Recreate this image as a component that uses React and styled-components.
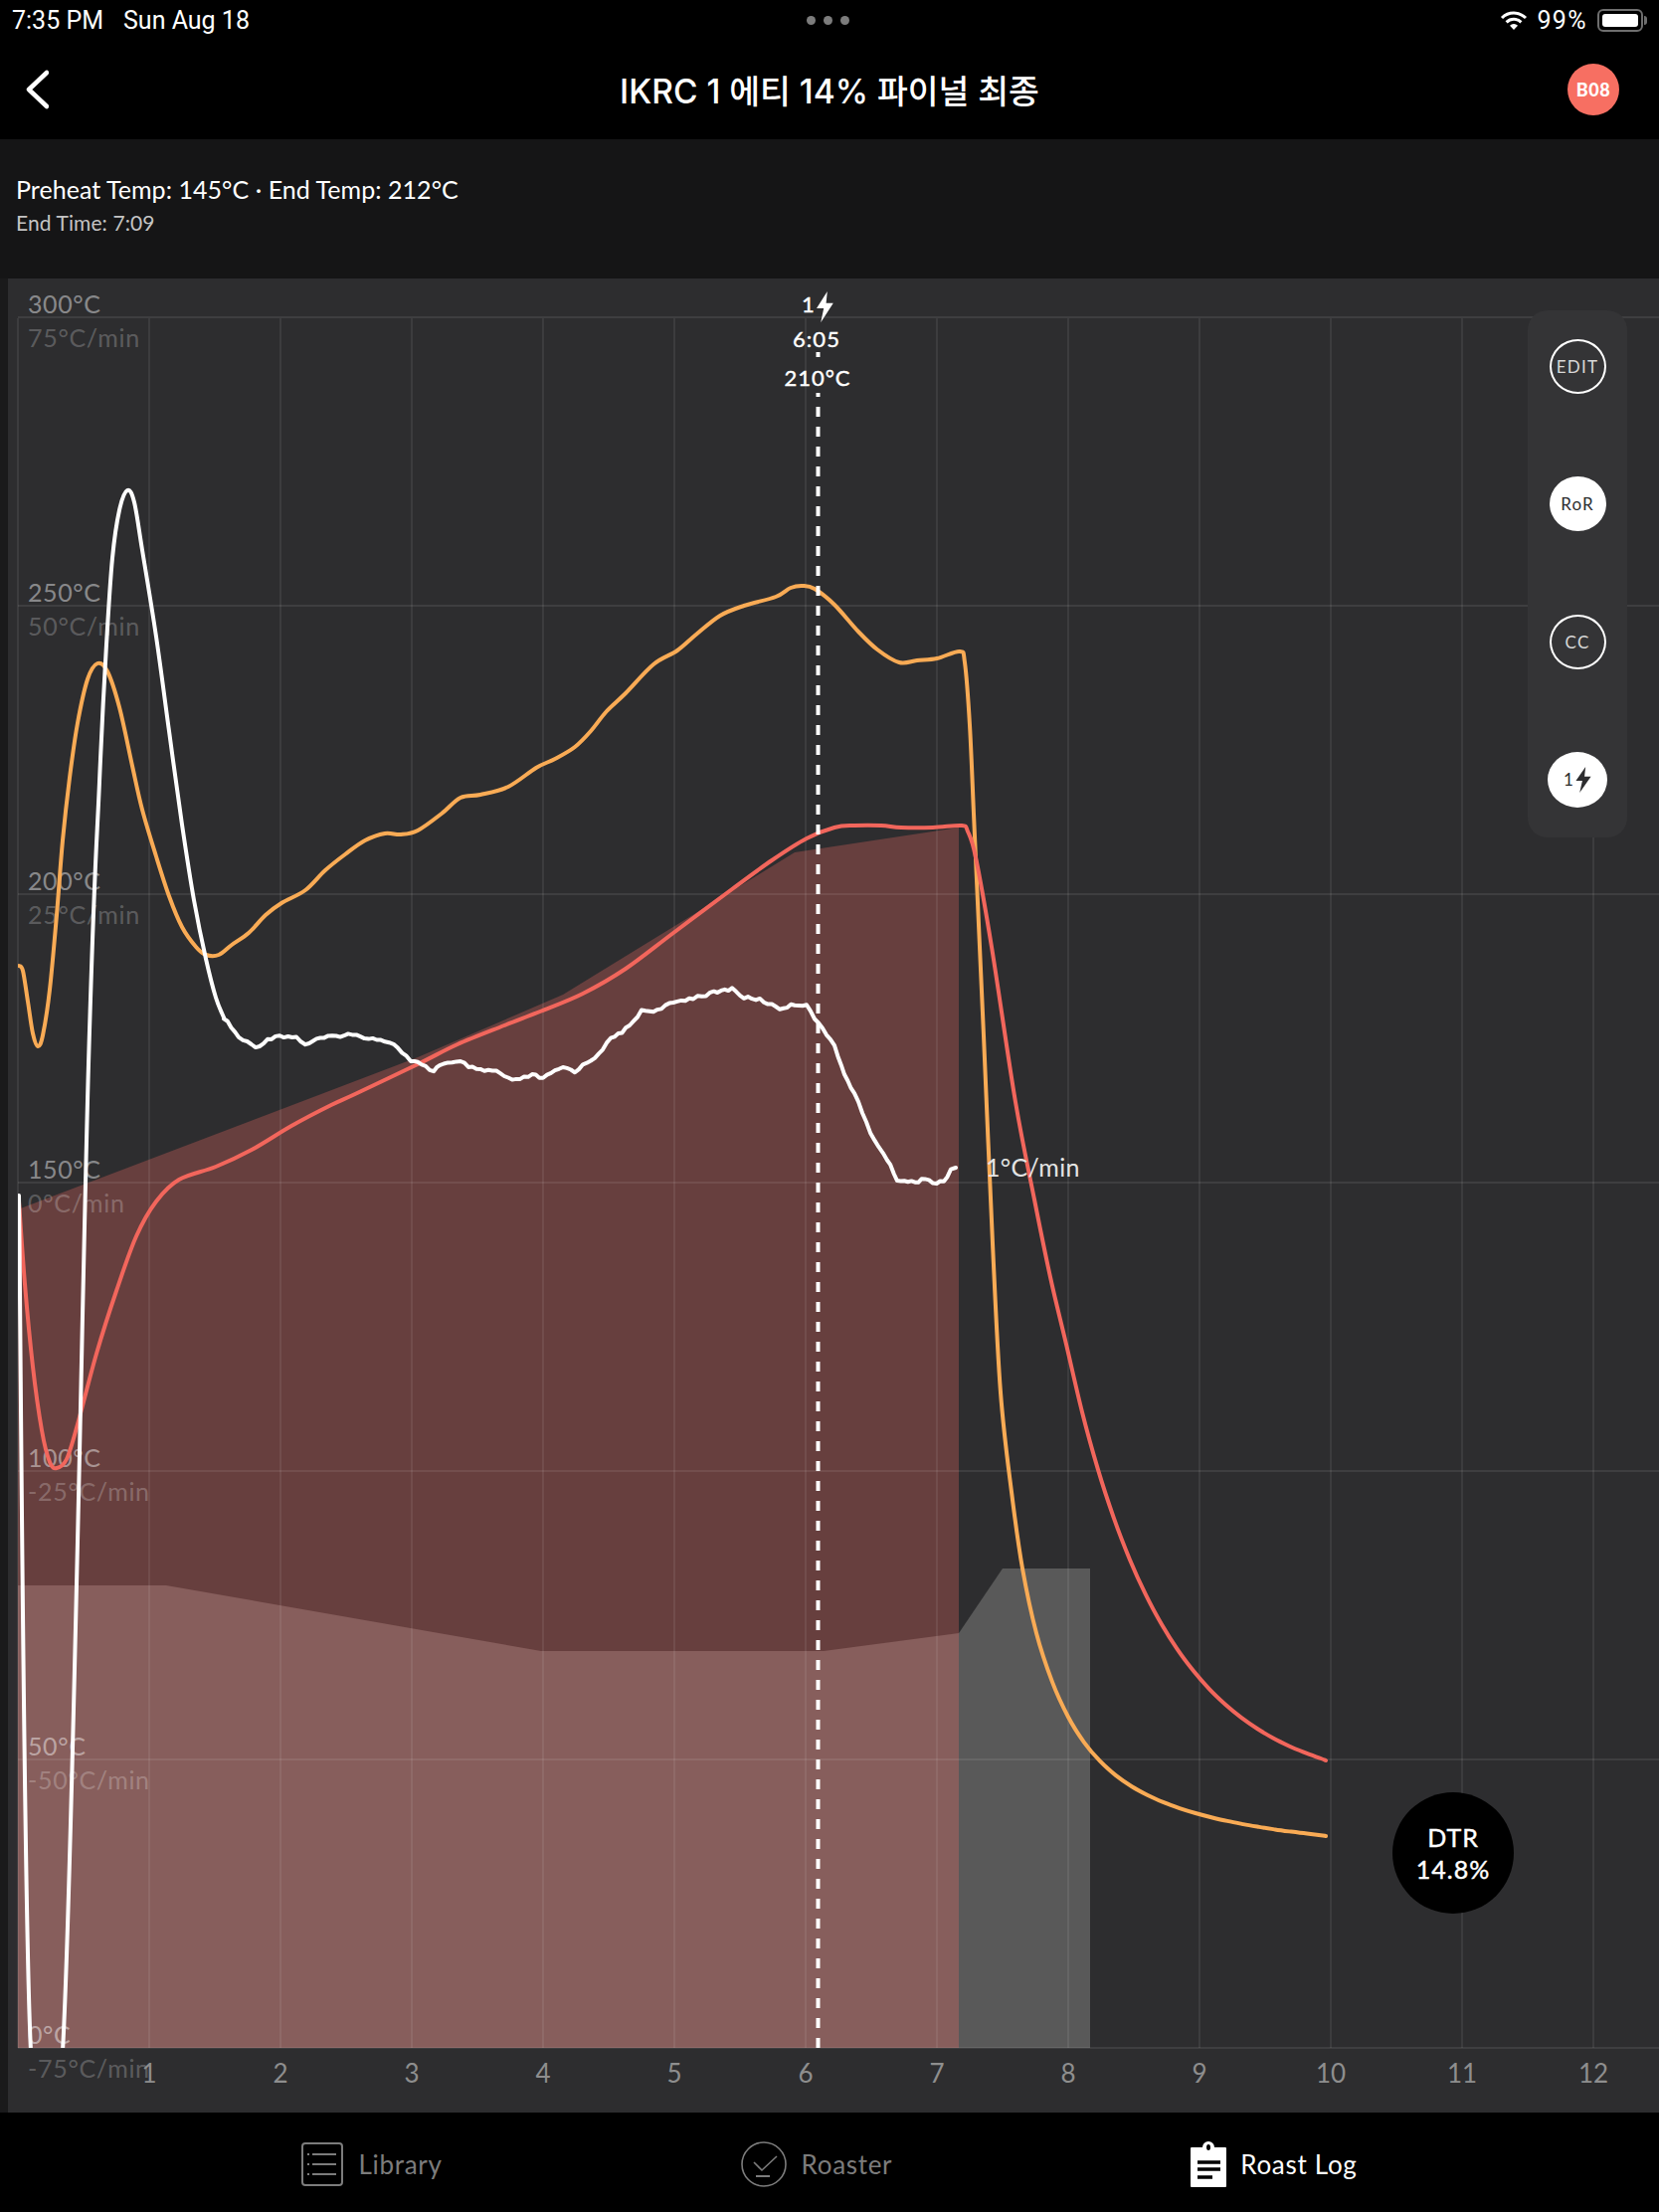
import React from "react";
import styled, { createGlobalStyle } from "styled-components";

const GlobalStyle = createGlobalStyle`
  html, body {
    margin: 0;
    padding: 0;
    background: #000;
  }
  * {
    box-sizing: border-box;
  }
`;

// cooling tails are plain decays, sampled so the smoothing stays clean
const sample = (from, to, fn) => {
  const out = [];
  for (let x = from; x <= to; x += 16) out.push([x, Math.round(fn(x) * 10) / 10]);
  return out;
};

const orangeTail = (x) =>
  1862 - 120 * Math.exp(-(x - 1042) / 40) - 100 * Math.exp(-(x - 1042) / 160);
const redTail = (x) => 1800 - 300 * Math.exp(-(x - 1111) / 97);

// all curve points are in page pixels, the chart svg viewBox starts at the panel corner
const ORANGE = [
  [19, 971], [23, 976], [28, 1007], [33, 1039], [38, 1052], [43, 1041], [50, 995], [57, 920],
  [63, 845], [70, 782], [78, 727], [88, 683], [98, 667], [108, 675], [120, 711], [133, 770],
  [143, 814], [157, 861], [170, 901], [183, 932], [197, 952], [207, 960], [220, 960], [233, 950],
  [250, 938], [267, 920], [283, 908], [307, 895], [327, 875], [347, 859], [367, 845], [387, 838],
  [403, 839], [420, 835], [444, 818], [463, 802], [483, 799], [511, 791], [539, 772], [558, 763],
  [578, 751], [594, 735], [610, 715], [629, 697], [657, 668], [681, 654], [701, 637], [724, 619],
  [748, 609], [780, 600], [795, 591], [807, 589], [819, 592], [839, 608], [863, 635], [882, 653],
  [904, 666], [922, 664], [942, 662], [965, 655], [970, 666], [975, 729], [979, 818], [983, 907],
  [989, 1041], [998, 1250], [1006, 1400], [1017, 1500], [1028, 1577],
  ...sample(1042, 1333, orangeTail),
  [1333, 1846],
];

const RED = [
  [19, 1208], [25, 1291], [33, 1374], [42, 1438], [50, 1470], [57, 1476], [67, 1467], [78, 1432],
  [97, 1361], [117, 1298], [137, 1243], [157, 1208], [180, 1186], [217, 1173], [253, 1156],
  [293, 1132], [333, 1111], [357, 1100], [420, 1070], [460, 1050], [507, 1031], [543, 1017],
  [586, 999], [629, 974], [677, 938], [736, 894], [776, 865], [811, 843], [839, 832], [859, 830],
  [886, 830], [906, 832], [938, 832], [967, 830], [973, 836], [981, 862], [997, 952], [1021, 1108],
  [1040, 1206], [1056, 1284],
  ...sample(1072, 1333, redTail),
  [1333, 1770],
];

const WHITE_RISE = [
  [19, 1202], [31, 2062], [63, 2062], [89, 1070], [100, 786], [107, 648], [113, 561], [120, 513],
  [128, 493], [135, 505], [143, 553], [157, 640], [170, 735], [183, 829], [195, 905], [207, 964],
  [217, 1003], [225, 1023],
];

const WHITE_NOISY = [
  [225, 1023], [240, 1043], [257, 1053], [277, 1041], [298, 1043], [307, 1050], [322, 1044],
  [350, 1040], [387, 1046], [400, 1053], [413, 1067], [420, 1069], [436, 1077], [442, 1070],
  [463, 1068], [479, 1076], [499, 1077], [515, 1087], [535, 1081], [546, 1084], [566, 1073],
  [578, 1077], [598, 1063], [614, 1045], [633, 1032], [645, 1016], [661, 1016], [677, 1008],
  [697, 1003], [714, 999], [736, 994], [748, 1003], [764, 1005], [784, 1014], [799, 1010],
  [811, 1010], [823, 1030], [839, 1050], [849, 1081], [859, 1099], [875, 1139], [892, 1166],
  [902, 1186], [920, 1189], [930, 1184], [938, 1189], [949, 1189], [956, 1175], [961, 1174],
];

const DARK_AREA = "18,1216 420,1063 566,1000 799,857 964,832 964,2059 18,2059";
const LIGHT_AREA = "18,1594 167,1594 544,1660 828,1660 964,1642 964,2059 18,2059";
const GRAY_AREA = "964,1642 1008,1577 1096,1577 1096,2059 964,2059";

const gridX = (t) => 18 + 132 * t;
const gridY = (temp) => 2059 - 5.8 * temp;

const TICKS = [1, 2, 3, 4, 5, 6, 7, 8, 9, 10, 11, 12];
const SCALE = [
  { temp: 300, rate: 75 },
  { temp: 250, rate: 50 },
  { temp: 200, rate: 25 },
  { temp: 150, rate: 0 },
  { temp: 100, rate: -25 },
  { temp: 50, rate: -50 },
  { temp: 0, rate: -75 },
];

// catmull-rom through the points
const smoothPath = (pts) => {
  let d = `M${pts[0][0]} ${pts[0][1]}`;
  for (let i = 0; i < pts.length - 1; i++) {
    const p0 = pts[i - 1] || pts[i];
    const p1 = pts[i];
    const p2 = pts[i + 1];
    const p3 = pts[i + 2] || p2;
    const c1x = p1[0] + (p2[0] - p0[0]) / 6;
    const c1y = p1[1] + (p2[1] - p0[1]) / 6;
    const c2x = p2[0] - (p3[0] - p1[0]) / 6;
    const c2y = p2[1] - (p3[1] - p1[1]) / 6;
    d += ` C${c1x.toFixed(1)} ${c1y.toFixed(1)} ${c2x.toFixed(1)} ${c2y.toFixed(1)} ${p2[0]} ${p2[1]}`;
  }
  return d;
};

// the sensor line wobbles, add a small repeatable jitter
const noisyPath = (pts) => {
  let d = "";
  let n = 0;
  for (let i = 0; i < pts.length - 1; i++) {
    const [x1, y1] = pts[i];
    const [x2, y2] = pts[i + 1];
    const steps = Math.max(1, Math.round((x2 - x1) / 4));
    for (let s = 0; s < steps; s++) {
      const k = s / steps;
      const hash = Math.sin(++n * 12.9898) * 43758.5453;
      const jitter = (hash - Math.floor(hash) - 0.5) * 3;
      d += `${d ? " L" : "M"}${(x1 + (x2 - x1) * k).toFixed(1)} ${(y1 + (y2 - y1) * k + jitter).toFixed(1)}`;
    }
  }
  const last = pts[pts.length - 1];
  return `${d} L${last[0]} ${last[1]}`;
};

const BOLT = "M9 0 L0 13 H6 L3.5 24 L14 9 H8 Z";

const Page = styled.div`
  width: 1668px;
  height: 2224px;
  display: flex;
  flex-direction: column;
  background: #000;
  font-family: "Lato", "Noto Sans CJK KR", sans-serif;
  color: #fff;
  overflow: hidden;
`;

const StatusBar = styled.div`
  height: 40px;
  flex: none;
  display: grid;
  grid-template-columns: 1fr auto 1fr;
  align-items: center;
  padding: 0 16px 0 12px;
  font-family: "Roboto", sans-serif;
  font-size: 25px;
`;

const StatusLeft = styled.div`
  display: flex;
  gap: 20px;
`;

const Dots = styled.div`
  display: flex;
  gap: 8px;
`;

const Dot = styled.span`
  width: 9px;
  height: 9px;
  border-radius: 50%;
  background: #7c7c7c;
`;

const StatusRight = styled.div`
  display: flex;
  align-items: center;
  justify-content: flex-end;
  gap: 9px;
`;

const Percent = styled.span`
  letter-spacing: 1.4px;
  margin-right: 1px;
`;

const Battery = styled.div`
  width: 46px;
  height: 23px;
  padding: 3px;
  border: 2px solid #6e6e6e;
  border-radius: 6px;
  position: relative;
  &::before {
    content: "";
    display: block;
    height: 100%;
    border-radius: 3px;
    background: #fff;
  }
  &::after {
    content: "";
    position: absolute;
    right: -6px;
    top: 5px;
    width: 3px;
    height: 9px;
    border-radius: 0 3px 3px 0;
    background: #6e6e6e;
  }
`;

const NavBar = styled.div`
  height: 100px;
  flex: none;
  display: flex;
  align-items: center;
  justify-content: space-between;
`;

const NavSide = styled.div`
  width: 200px;
  display: flex;
  justify-content: ${(p) => (p.$right ? "flex-end" : "flex-start")};
  padding: ${(p) => (p.$right ? "0 40px 0 0" : "0 0 0 25px")};
`;

const Title = styled.h1`
  margin: 0 0 2px;
  font-family: "Inter", "Noto Sans CJK KR", sans-serif;
  font-size: 33.5px;
  font-weight: 500;
  text-align: center;
`;

const Badge = styled.div`
  width: 52px;
  height: 52px;
  border-radius: 50%;
  background: #f76f62;
  display: flex;
  align-items: center;
  justify-content: center;
  font-size: 18px;
  letter-spacing: 0.5px;
  font-weight: 900;
`;

const Info = styled.div`
  height: 140px;
  flex: none;
  padding: 35px 16px 0;
  background: #151516;
`;

const InfoMain = styled.div`
  font-size: 25px;
  line-height: 30px;
  letter-spacing: 0.05px;
`;

const InfoSub = styled.div`
  margin-top: 7px;
  font-size: 21px;
  line-height: 24px;
  letter-spacing: 0.1px;
  color: #c4c4c4;
`;

const ChartWrap = styled.div`
  flex: 1;
  min-height: 0;
  padding-left: 8px;
  background: #1a1a1b;
`;

const ChartPanel = styled.div`
  position: relative;
  width: 1660px;
  height: 100%;
  background: #2d2d2f;
`;

const ChartSvg = styled.svg`
  display: block;
  font-family: "Lato", sans-serif;
`;

const TempLabel = styled.text`
  font-size: 25px;
  letter-spacing: 0.6px;
  fill: rgba(255, 255, 255, 0.45);
`;

const RateLabel = styled.text`
  font-size: 25px;
  letter-spacing: 0.7px;
  fill: rgba(255, 255, 255, 0.24);
`;

const TickLabel = styled.text`
  font-size: 26px;
  fill: #8e8e8e;
  text-anchor: middle;
`;

const MarkLabel = styled.text`
  font-size: 22px;
  fill: #fff;
  stroke: #fff;
  stroke-width: 0.4;
  text-anchor: middle;
  letter-spacing: 1px;
`;

const RorLabel = styled.text`
  font-size: 25px;
  letter-spacing: 0.3px;
  fill: #e4e4e4;
`;

const Curve = styled.path`
  fill: none;
  stroke: ${(p) => p.$color};
  stroke-width: 4;
  stroke-linejoin: round;
  stroke-linecap: round;
`;

const ButtonRail = styled.div`
  position: absolute;
  left: 1528px;
  top: 32px;
  width: 100px;
  height: 530px;
  padding: 29px 0 30px;
  border-radius: 20px;
  background: #343436;
  display: flex;
  flex-direction: column;
  align-items: center;
  justify-content: space-between;
`;

const RailButton = styled.div`
  width: ${(p) => (p.$wide ? "60px" : "57px")};
  height: ${(p) => (p.$wide ? "56px" : "55px")};
  border-radius: 50%;
  display: flex;
  align-items: center;
  justify-content: center;
  gap: 1px;
  font-size: 17px;
  letter-spacing: 1.2px;
  border: 2px solid #fff;
  background: ${(p) => (p.$filled ? "#fff" : "transparent")};
  color: ${(p) => (p.$filled ? "#2d2d2f" : "#d8d8d8")};
`;

const DtrBadge = styled.div`
  position: absolute;
  left: 1392px;
  top: 1522px;
  width: 122px;
  height: 122px;
  border-radius: 50%;
  background: #000;
  display: flex;
  flex-direction: column;
  align-items: center;
  justify-content: center;
  font-size: 25px;
  line-height: 32px;
  letter-spacing: 1px;
  -webkit-text-stroke: 0.4px #fff;
`;

const TabBar = styled.div`
  height: 100px;
  flex: none;
  padding-top: 3px;
  display: flex;
  align-items: center;
  justify-content: center;
  gap: 300px;
`;

const Tab = styled.div`
  display: flex;
  align-items: center;
  gap: ${(p) => (p.$active ? "14px" : "15px")};
  font-size: 26px;
  letter-spacing: 0.7px;
  color: ${(p) => (p.$active ? "#fff" : "#7c7c7c")};
`;

const WifiIcon = () => (
  <svg width="28" height="20" viewBox="0 0 28 20" fill="none">
    <path d="M2 8 A17 17 0 0 1 26 8" stroke="#fff" strokeWidth="3" />
    <path d="M6.6 12.4 A10.5 10.5 0 0 1 21.4 12.4" stroke="#fff" strokeWidth="3" />
    <path d="M14 20 L10 15.8 A5.6 5.6 0 0 1 18 15.8 Z" fill="#fff" />
  </svg>
);

const LibraryIcon = () => (
  <svg width="42" height="44" viewBox="0 0 42 44" fill="none" stroke="#7c7c7c" strokeWidth="2">
    <rect x="1" y="1" width="40" height="42" rx="3" />
    <path d="M11 12 H35 M11 22 H35 M11 32 H35" />
    <path d="M6 12 H8 M6 22 H8 M6 32 H8" />
  </svg>
);

const RoasterIcon = () => (
  <svg width="46" height="46" viewBox="0 0 46 46" fill="none" stroke="#7c7c7c" strokeWidth="1.6">
    <circle cx="23" cy="23" r="22" />
    <path d="M13 21 L21 29 L36 15" />
    <path d="M15 35 H29" strokeWidth="2" />
  </svg>
);

const RoastLogIcon = () => (
  <svg width="36" height="46" viewBox="0 0 36 46">
    <path d="M1 6 H12 A6 6 0 0 1 24 6 H35 A1 1 0 0 1 36 7 V45 A1 1 0 0 1 35 46 H1 A1 1 0 0 1 0 45 V7 A1 1 0 0 1 1 6 Z" fill="#fff" />
    <ellipse cx="18" cy="6" rx="2" ry="3" fill="#000" />
    <path d="M7 21 H30 M7 28 H30 M7 36 H22" stroke="#000" strokeWidth="3.5" />
  </svg>
);

const BackIcon = () => (
  <svg width="24" height="40" viewBox="0 0 24 40" fill="none">
    <path d="M22 3 L4 20 L22 37" stroke="#fff" strokeWidth="4.5" strokeLinecap="round" strokeLinejoin="round" />
  </svg>
);

const Chart = () => (
  <ChartSvg width="1660" height="1844" viewBox="8 280 1660 1844">
    <defs>
      <clipPath id="plot">
        <rect x="18" y="320" width="1650" height="1739" />
      </clipPath>
    </defs>

    <polygon points={DARK_AREA} fill="#673f3e" />
    <polygon points={LIGHT_AREA} fill="#875e5c" />
    <polygon points={GRAY_AREA} fill="#595959" />

    {[0, ...TICKS].map((t) => (
      <line key={t} x1={gridX(t)} x2={gridX(t)} y1="320" y2="2059" stroke="rgba(255,255,255,0.1)" strokeWidth="1.5" />
    ))}
    {SCALE.map((s) => (
      <line key={s.temp} x1="18" x2="1668" y1={gridY(s.temp)} y2={gridY(s.temp)} stroke="rgba(255,255,255,0.11)" strokeWidth="1.5" />
    ))}

    {SCALE.map((s) => (
      <React.Fragment key={s.temp}>
        <TempLabel x="28" y={gridY(s.temp) - 4}>{s.temp}°C</TempLabel>
        <RateLabel x="28" y={gridY(s.temp) + 30}>{s.rate}°C/min</RateLabel>
      </React.Fragment>
    ))}
    {TICKS.map((t) => (
      <TickLabel key={t} x={gridX(t)} y="2094">{t}</TickLabel>
    ))}

    <g clipPath="url(#plot)">
      <Curve d={smoothPath(ORANGE)} $color="#f9ab55" />
      <Curve d={smoothPath(RED)} $color="#f2665c" />
      <Curve d={smoothPath(WHITE_RISE)} $color="#fff" />
      <Curve d={noisyPath(WHITE_NOISY)} $color="#fff" />
    </g>

    <line x1="822.5" x2="822.5" y1="2059" y2="395" stroke="#fff" strokeWidth="4" strokeDasharray="10 10" />
    <line x1="822.5" x2="822.5" y1="359" y2="354" stroke="#fff" strokeWidth="4" />

    <MarkLabel x="813" y="314">1</MarkLabel>
    <path d={BOLT} transform="translate(821 293) scale(1.2 1.3)" fill="#fff" />
    <MarkLabel x="821" y="349">6:05</MarkLabel>
    <MarkLabel x="822" y="388">210°C</MarkLabel>
    <RorLabel x="991" y="1183">1°C/min</RorLabel>
  </ChartSvg>
);

export default function App() {
  return (
    <>
      <GlobalStyle />
      <Page>
        <StatusBar>
          <StatusLeft>
            <span>7:35 PM</span>
            <span>Sun Aug 18</span>
          </StatusLeft>
          <Dots>
            <Dot />
            <Dot />
            <Dot />
          </Dots>
          <StatusRight>
            <WifiIcon />
            <Percent>99%</Percent>
            <Battery />
          </StatusRight>
        </StatusBar>

        <NavBar>
          <NavSide>
            <BackIcon />
          </NavSide>
          <Title>IKRC 1 에티 14% 파이널 최종</Title>
          <NavSide $right>
            <Badge>B08</Badge>
          </NavSide>
        </NavBar>

        <Info>
          <InfoMain>Preheat Temp: 145°C · End Temp: 212°C</InfoMain>
          <InfoSub>End Time: 7:09</InfoSub>
        </Info>

        <ChartWrap>
          <ChartPanel>
            <Chart />
            <ButtonRail>
              <RailButton>EDIT</RailButton>
              <RailButton $filled>RoR</RailButton>
              <RailButton>CC</RailButton>
              <RailButton $filled $wide>
                1
                <svg width="16" height="26" viewBox="0 0 14 24">
                  <path d={BOLT} fill="#2d2d2f" />
                </svg>
              </RailButton>
            </ButtonRail>
            <DtrBadge>
              <span>DTR</span>
              <span>14.8%</span>
            </DtrBadge>
          </ChartPanel>
        </ChartWrap>

        <TabBar>
          <Tab>
            <LibraryIcon />
            Library
          </Tab>
          <Tab>
            <RoasterIcon />
            Roaster
          </Tab>
          <Tab $active>
            <RoastLogIcon />
            Roast Log
          </Tab>
        </TabBar>
      </Page>
    </>
  );
}
